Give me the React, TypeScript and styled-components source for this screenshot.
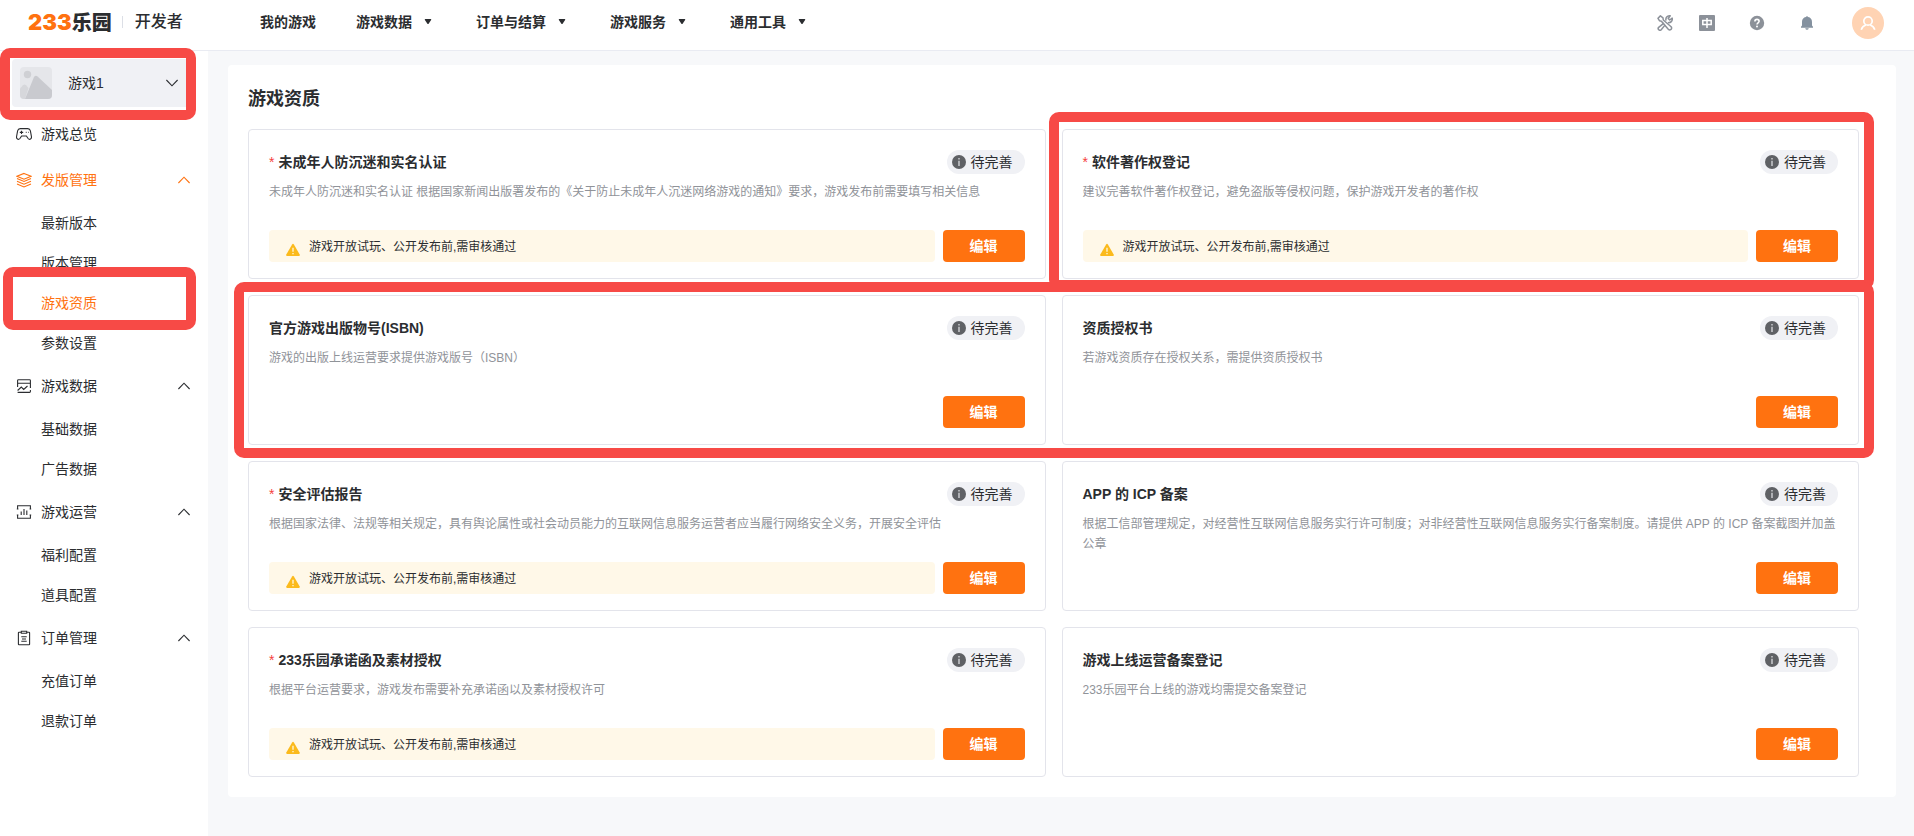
import React from "react";
import styled, { createGlobalStyle } from "styled-components";

const color = {
  brand: "#ff7210",
  text: "#2b2d30",
  muted: "#909399",
  line: "#e3e4eb",
  soft: "#f0f1f5",
  page: "#f7f8fa",
  mark: "#f74a46",
};

const GlobalStyle = createGlobalStyle`
  *, *::before, *::after { box-sizing: border-box; }
  body {
    margin: 0;
    background: ${color.page};
    color: ${color.text};
    font-family: "Liberation Sans", "Noto Sans CJK SC", sans-serif;
    font-size: 14px;
    line-height: 20px;
  }
  button { font: inherit; color: inherit; border: 0; background: none; padding: 0; cursor: pointer; }
  a { color: inherit; text-decoration: none; }
  h1, h2, p, ul { margin: 0; padding: 0; }
  ul { list-style: none; }
  svg { display: block; flex: none; }
`;

const Page = styled.div`
  display: flex;
  flex-direction: column;
  min-height: 100vh;
`;

const Header = styled.header`
  display: flex;
  align-items: center;
  height: 51px;
  padding: 0 30px 4px 28px;
  background: #fff;
  border-bottom: 1px solid #e9ebf2;
`;

const Brand = styled.a`
  display: flex;
  align-items: center;
  width: 232px;
  flex: none;
  padding-bottom: 2px;
`;

const BrandDigits = styled.span`
  font-family: Inter, "Liberation Sans", sans-serif;
  font-size: 22px;
  font-weight: 900;
  color: ${color.brand};
`;

const BrandName = styled.span`
  font-family: "Noto Sans CJK SC", sans-serif;
  font-size: 20px;
  font-weight: 900;
`;

const BrandSub = styled.span`
  margin-left: 10px;
  padding-left: 12px;
  font-size: 16px;
  font-weight: 500;
  line-height: 12px;
  border-left: 1px solid #dcdfe6;
`;

const Nav = styled.nav`
  display: flex;
  gap: 40px;
  flex: 1;
  padding-bottom: 2px;
`;

const NavItem = styled.button<{ $menu?: boolean }>`
  display: flex;
  align-items: center;
  gap: 12px;
  padding-right: ${(p) => (p.$menu ? 4 : 0)}px;
  font-weight: 700;
  white-space: nowrap;
`;

const Tools = styled.div`
  display: flex;
  align-items: center;
  gap: 34px;
  color: #8c9199;
`;

const ToolPair = styled.div`
  display: flex;
  gap: 26px;
`;

const Avatar = styled.button`
  display: grid;
  place-items: center;
  width: 32px;
  height: 32px;
  margin-left: 3px;
  border-radius: 50%;
  background: #ffd3b3;
  color: #fff;
`;

const Body = styled.div`
  display: flex;
  flex: 1;
`;

const Sidebar = styled.aside`
  width: 208px;
  flex: none;
  padding: 8px 12px;
  background: #fff;
`;

const Mark = styled.span<{ $inset: string; $row?: string; $column?: string }>`
  position: absolute;
  inset: ${(p) => p.$inset};
  grid-row: ${(p) => p.$row ?? "auto"};
  grid-column: ${(p) => p.$column ?? "auto"};
  border: 10px solid ${color.mark};
  border-radius: 10px;
  pointer-events: none;
  z-index: 1;
`;

const GamePicker = styled.button`
  position: relative;
  display: flex;
  align-items: center;
  width: 100%;
  height: 48px;
  margin-bottom: 4px;
  padding: 0 18px 0 8px;
  gap: 16px;
  border-radius: 4px;
  background: ${color.soft};
  text-align: left;
`;

const Grow = styled.span`
  flex: 1;
`;

const MenuHead = styled.button<{ $active?: boolean }>`
  display: flex;
  align-items: center;
  gap: 9px;
  width: 100%;
  height: 46px;
  padding: 0 6px 0 4px;
  text-align: left;
  color: ${(p) => (p.$active ? color.brand : color.text)};
`;

const SubItem = styled.a<{ $active?: boolean }>`
  position: relative;
  display: flex;
  align-items: center;
  height: 40px;
  padding-left: 29px;
  color: ${(p) => (p.$active ? color.brand : color.text)};
`;

const Main = styled.main`
  flex: 1;
  min-width: 0;
  padding: 14px 18px 39px 20px;
`;

const Panel = styled.section`
  padding: 22px 37px 20px 20px;
  border-radius: 4px;
  background: #fff;
`;

const PanelTitle = styled.h1`
  margin-bottom: 18px;
  font-size: 18px;
  line-height: 24px;
  font-weight: 700;
`;

const Grid = styled.div`
  position: relative;
  display: grid;
  grid-template-columns: repeat(2, minmax(0, 1fr));
  gap: 16px;
`;

const Card = styled.article`
  display: flex;
  flex-direction: column;
  gap: 8px;
  padding: 20px 20px 16px;
  border: 1px solid ${color.line};
  border-radius: 4px;
`;

const CardHead = styled.div`
  display: flex;
  align-items: center;
  justify-content: space-between;
  height: 24px;
`;

const CardTitle = styled.h2`
  font-size: 14px;
  font-weight: 700;
`;

const Star = styled.span`
  margin-right: 4px;
  font-weight: 400;
  color: #f5413c;
`;

const Badge = styled.span`
  display: flex;
  align-items: center;
  gap: 5px;
  height: 24px;
  padding: 0 12px 0 5px;
  border-radius: 12px;
  background: ${color.soft};
`;

const CardText = styled.p`
  min-height: 40px;
  font-size: 12px;
  color: ${color.muted};
`;

const CardFoot = styled.div`
  display: flex;
  justify-content: flex-end;
  gap: 8px;
`;

const Notice = styled.p`
  display: flex;
  align-items: center;
  flex: 1;
  gap: 8px;
  height: 32px;
  padding: 2px 16px 0;
  border-radius: 4px;
  background: #fff8e8;
  font-size: 12px;

  svg { margin-top: 6px; }
`;

const EditButton = styled.button`
  width: 82px;
  height: 32px;
  border-radius: 4px;
  background: ${color.brand};
  color: #fff;
  font-weight: 700;
`;

const Caret = () => (
  <svg width="8" height="6" viewBox="0 0 8 6" fill="currentColor">
    <path d="M1.4 0h5.2q1 .2.5 1L4.6 4.7q-.6.7-1.2 0L.9 1Q.4.2 1.4 0z" />
  </svg>
);

const Chevron = ({ up }: { up?: boolean }) => (
  <svg width="12" height="12" viewBox="0 0 12 12" fill="none" stroke="currentColor" strokeWidth="1.1">
    <path d={up ? "M.4 9 6 3.2 11.6 9" : "M.4 3 6 8.8 11.6 3"} />
  </svg>
);

const line = { width: 16, height: 16, viewBox: "0 0 16 16", fill: "none", stroke: "currentColor", strokeWidth: 1.1 };

const GamepadIcon = () => (
  <svg {...line}>
    <path d="M4.2 2.6h7.6c1.6 0 2.3 1 2.6 2.3l1 5.4c.5 2.6-1.8 4-3.3 2.2L10.4 10H5.6l-1.7 2.5C2.4 14.3.1 12.9.6 10.3l1-5.4c.3-1.3 1-2.3 2.6-2.3z" />
    <path d="M3.8 6.4h3.4M5.5 4.7v3.4M9.8 6.4h.8M12 6.4h.6" />
  </svg>
);

const LayersIcon = () => (
  <svg {...line}>
    <path d="M8 1.4 15 4.3 8 7.2 1 4.3z" />
    <path d="M1 6.5l7 3 7-3M1 9.2l7 3 7-3M1 11.9l7 3 7-3" />
  </svg>
);

const DataIcon = () => (
  <svg {...line}>
    <path d="M14.4 10V2.6q0-.8-.8-.8H2.4q-.8 0-.8.8V9M1.6 5.3h12.8" />
    <path d="M1.6 12.5 5.3 9l2.4 2.4L11.5 8M1.6 14.4h12q.8 0 .8-.8V12" />
  </svg>
);

const OpsIcon = () => (
  <svg {...line}>
    <path d="M1.6 5V1.7h12.8V5M1.6 11v3.3h12.8V11M.8 5h1.6M13.6 5h1.6M.8 11h1.6M13.6 11h1.6" />
    <path d="M5.2 7.5V11M8 5v6M10.8 6.5V11" />
  </svg>
);

const OrderIcon = () => (
  <svg {...line}>
    <path d="M5 2.2H3q-.6 0-.6.6v11.4q0 .6.6.6h10q.6 0 .6-.6V2.8q0-.6-.6-.6h-2M5.3 1.2h5.4v2H5.3zM5.3 6.7h5.4M6 9h4M5.3 11.3h5.4" />
  </svg>
);

const Picture = () => (
  <svg width="32" height="32" viewBox="0 0 32 32">
    <defs>
      <clipPath id="pictureClip">
        <rect width="32" height="32" rx="4" />
      </clipPath>
    </defs>
    <g clipPath="url(#pictureClip)">
      <rect width="32" height="32" fill="#e5e6ea" />
      <circle cx="7.5" cy="7.5" r="3.7" fill="#cfd0d4" />
      <path d="M0 21.5 3 18.2q1.5-1.4 3 0L8.5 21 5 32H0z" fill="#d6d7db" />
      <path d="M5 32 14 10q1.6-2.4 3.6-.6L32 23v9z" fill="#c9cacf" />
    </g>
  </svg>
);

const WrenchIcon = () => (
  <svg {...line} strokeWidth={1.5} strokeLinejoin="round">
    <path d="M3.4.9 1 3.300l1.600 2.500 1.800.4 6.900 8.100c1.700 1.800 4.500-.6 2.800-2.500L6.300 5l-.3-2.200z" />
    <path d="M9 5.700c-.7-3.100 1.200-5.300 4.200-4.900l-2 2.700 1.500 1.500 2.500-1.900c.5 3-1.500 4.900-4.300 4.500M6.900 8.200 1.700 12.300c-1.600 1.700 1 4.100 2.500 2.500l4-4.900" />
  </svg>
);

const LanguageIcon = () => (
  <svg width="16" height="16" viewBox="0 0 16 16">
    <rect width="16" height="16" rx="1" fill="currentColor" />
    <path d="M3.800 5.500h8.400v4H3.800zM8 3v10" fill="none" stroke="#fff" strokeWidth="1.5" />
  </svg>
);

const HelpIcon = () => (
  <svg width="16" height="16" viewBox="0 0 16 16" fill="none">
    <circle cx="8" cy="8" r="7.2" fill="currentColor" />
    <path d="M5.9 6.4C5.9 3.6 10.1 3.7 10.1 6.3 10.1 7.8 8 7.8 8 9.5" stroke="#fff" strokeWidth="1.6" />
    <circle cx="8" cy="11.5" r="1" fill="#fff" />
  </svg>
);

const BellIcon = () => (
  <svg width="16" height="16" viewBox="0 0 16 16" fill="#84919f">
    <path d="M8 1.2c.7 0 1 .3 1.1.9 2.500.5 3.900 2.300 3.900 4.900v3.600l1 1.200v.9H2v-.9l1-1.200V7c0-2.600 1.400-4.400 3.900-4.900.1-.6.4-.9 1.100-.9zM6.200 13.300h3.600q-.4 1.500-1.800 1.500t-1.800-1.500z" />
  </svg>
);

const UserIcon = () => (
  <svg width="16" height="16" viewBox="0 0 16 16" fill="none" stroke="#fff" strokeWidth="1.7">
    <circle cx="8" cy="6" r="4.2" />
    <path d="M1.2 14.8c.9-2.700 2.700-4.300 4.700-4.800M14.800 14.800c-.9-2.700-2.700-4.300-4.700-4.800" />
  </svg>
);

const InfoIcon = () => (
  <svg width="14" height="14" viewBox="0 0 14 14">
    <circle cx="7" cy="7" r="7" fill="#5f6165" />
    <path d="M6.200 3h1.600v1.500H6.200zM6.200 5.700h1.600V11H6.200z" fill="#c4c5c9" />
  </svg>
);

const WarningIcon = () => (
  <svg width="16" height="14" viewBox="0 0 16 14">
    <path d="M7.100 1.500q.9-1.400 1.800 0l5.800 10q.6 1.300-.9 1.400H2.200q-1.500-.1-.9-1.400z" fill="#fbba1c" />
    <path d="M8 4.800v4M8 9.900v1.400" stroke="#fff3d0" strokeWidth="1.4" />
  </svg>
);

const navItems = [
  { label: "我的游戏" },
  { label: "游戏数据", menu: true },
  { label: "订单与结算", menu: true },
  { label: "游戏服务", menu: true },
  { label: "通用工具", menu: true },
];

const menu = [
  { label: "游戏总览", icon: <GamepadIcon />, items: [] },
  { label: "发版管理", icon: <LayersIcon />, items: ["最新版本", "版本管理", "游戏资质", "参数设置"], active: true },
  { label: "游戏数据", icon: <DataIcon />, items: ["基础数据", "广告数据"] },
  { label: "游戏运营", icon: <OpsIcon />, items: ["福利配置", "道具配置"] },
  { label: "订单管理", icon: <OrderIcon />, items: ["充值订单", "退款订单"] },
];

const currentItem = "游戏资质";

const cards = [
  {
    title: "未成年人防沉迷和实名认证",
    text: "未成年人防沉迷和实名认证 根据国家新闻出版署发布的《关于防止未成年人沉迷网络游戏的通知》要求，游戏发布前需要填写相关信息",
    required: true,
  },
  { title: "软件著作权登记", text: "建议完善软件著作权登记，避免盗版等侵权问题，保护游戏开发者的著作权", required: true },
  { title: "官方游戏出版物号(ISBN)", text: "游戏的出版上线运营要求提供游戏版号（ISBN）" },
  { title: "资质授权书", text: "若游戏资质存在授权关系，需提供资质授权书" },
  {
    title: "安全评估报告",
    text: "根据国家法律、法规等相关规定，具有舆论属性或社会动员能力的互联网信息服务运营者应当履行网络安全义务，开展安全评估",
    required: true,
  },
  {
    title: "APP 的 ICP 备案",
    text: "根据工信部管理规定，对经营性互联网信息服务实行许可制度；对非经营性互联网信息服务实行备案制度。请提供 APP 的 ICP 备案截图并加盖公章",
  },
  { title: "233乐园承诺函及素材授权", text: "根据平台运营要求，游戏发布需要补充承诺函以及素材授权许可", required: true },
  { title: "游戏上线运营备案登记", text: "233乐园平台上线的游戏均需提交备案登记" },
];

export default function App() {
  return (
    <Page>
      <GlobalStyle />
      <Header>
        <Brand href="#">
          <BrandDigits>233</BrandDigits>
          <BrandName>乐园</BrandName>
          <BrandSub>开发者</BrandSub>
        </Brand>
        <Nav>
          {navItems.map((item) => (
            <NavItem key={item.label} $menu={item.menu}>
              {item.label}
              {item.menu && <Caret />}
            </NavItem>
          ))}
        </Nav>
        <Tools>
          <ToolPair>
            <button aria-label="工具"><WrenchIcon /></button>
            <button aria-label="语言"><LanguageIcon /></button>
          </ToolPair>
          <button aria-label="帮助"><HelpIcon /></button>
          <button aria-label="通知"><BellIcon /></button>
          <Avatar aria-label="账号"><UserIcon /></Avatar>
        </Tools>
      </Header>
      <Body>
        <Sidebar>
          <GamePicker>
            <Picture />
            <Grow>游戏1</Grow>
            <Chevron />
            <Mark $inset="-11px 0 -13px -12px" />
          </GamePicker>
          <nav>
            {menu.map((group) => (
              <div key={group.label}>
                <MenuHead $active={group.active}>
                  {group.icon}
                  <Grow>{group.label}</Grow>
                  {group.items.length > 0 && <Chevron up />}
                </MenuHead>
                <ul>
                  {group.items.map((item) => (
                    <li key={item}>
                      <SubItem href="#" $active={item === currentItem}>
                        {item}
                        {item === currentItem && <Mark $inset="-16px 0 -7px -9px" />}
                      </SubItem>
                    </li>
                  ))}
                </ul>
              </div>
            ))}
          </nav>
        </Sidebar>
        <Main>
          <Panel>
            <PanelTitle>游戏资质</PanelTitle>
            <Grid>
              {cards.map((card) => (
                <Card key={card.title}>
                  <CardHead>
                    <CardTitle>
                      {card.required && <Star>*</Star>}
                      {card.title}
                    </CardTitle>
                    <Badge>
                      <InfoIcon />
                      待完善
                    </Badge>
                  </CardHead>
                  <CardText>{card.text}</CardText>
                  <CardFoot>
                    {card.required && (
                      <Notice>
                        <WarningIcon />
                        游戏开放试玩、公开发布前,需审核通过
                      </Notice>
                    )}
                    <EditButton>编辑</EditButton>
                  </CardFoot>
                </Card>
              ))}
              <Mark $inset="-17px -15px -11px -13px" $row="1 / 2" $column="2 / 3" />
              <Mark $inset="-13px -15px -13px -14px" $row="2 / 3" $column="1 / 3" />
            </Grid>
          </Panel>
        </Main>
      </Body>
    </Page>
  );
}
